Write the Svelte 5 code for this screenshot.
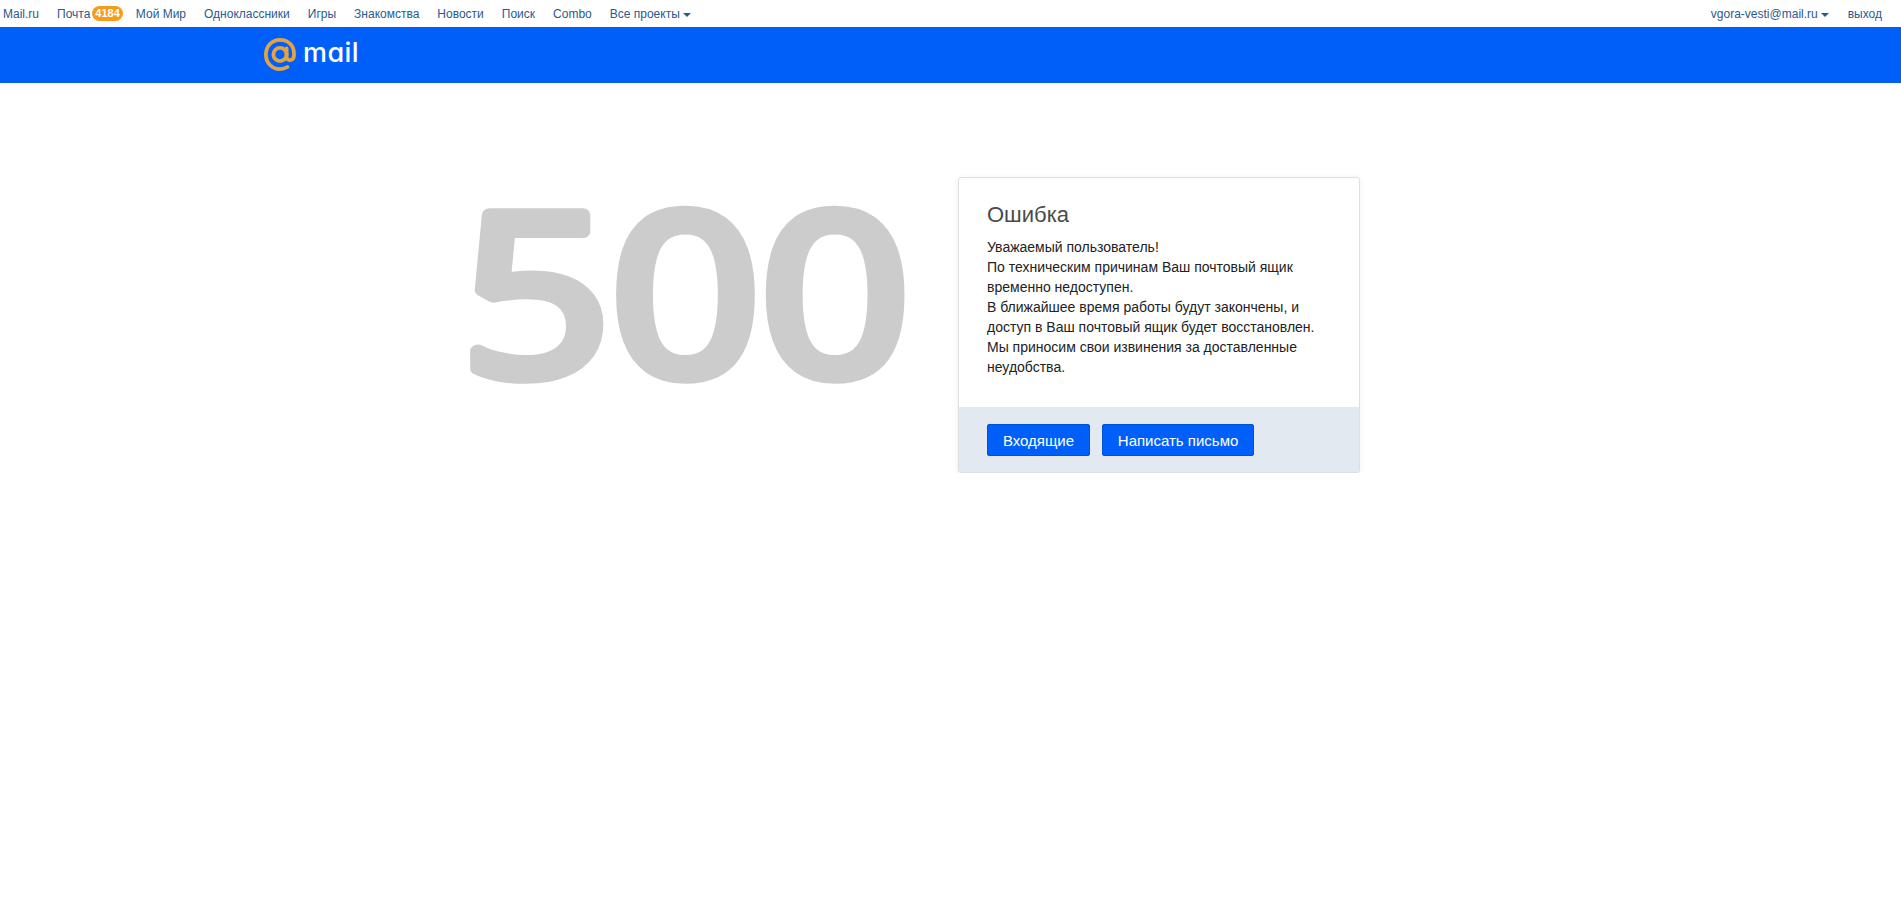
<script>
  const links = [
    { label: 'Mail.ru' },
    { label: 'Почта', badge: '4184' },
    { label: 'Мой Мир' },
    { label: 'Одноклассники' },
    { label: 'Игры' },
    { label: 'Знакомства' },
    { label: 'Новости' },
    { label: 'Поиск' },
    { label: 'Combo' },
    { label: 'Все проекты', caret: true }
  ];
  const lines = [
    'Уважаемый пользователь!',
    'По техническим причинам Ваш почтовый ящик',
    'временно недоступен.',
    'В ближайшее время работы будут закончены, и',
    'доступ в Ваш почтовый ящик будет восстановлен.',
    'Мы приносим свои извинения за доставленные',
    'неудобства.'
  ];
</script>

<nav class="topbar">
  <div class="nav-left">
    {#each links as l}
      <a class="nav-link" href="#top">{l.label}{#if l.badge}<span class="badge">{l.badge}</span>{/if}{#if l.caret}<span class="caret"></span>{/if}</a>
    {/each}
  </div>
  <div class="nav-right">
    <a class="nav-link" href="#top">vgora-vesti@mail.ru<span class="caret"></span></a>
    <a class="nav-link" href="#top">выход</a>
  </div>
</nav>

<header class="brand">
  <svg class="at" viewBox="0 0 32 34" width="32" height="34" aria-hidden="true">
    <circle cx="16" cy="16.5" r="6.6" fill="none" stroke="#e3a243" stroke-width="3.8"/>
    <path d="M22.6 10.5v8.5c0 4.2 6.6 4.2 7.2-.5 .2-1 .2-2 .2-3C30 7.5 24 1.9 16 1.9S1.9 8 1.9 16.5 8 31.1 16 31.1c2.8 0 5.2-.7 7.4-2.1" fill="none" stroke="#e3a243" stroke-width="3.8" stroke-linecap="round"/>
  </svg>
  <span class="wordmark">mail</span>
</header>

<main class="content">
  <svg class="code" width="480" height="220" viewBox="0 0 480 220" role="img" aria-label="500">
    <text transform="translate(11 195) scale(1.19 1.02)" class="code-text">500</text>
  </svg>
  <section class="card">
    <div class="card-body">
      <h1>Ошибка</h1>
      <p>{#each lines as line}<span class="line">{line}</span>{/each}</p>
    </div>
    <div class="card-foot">
      <button class="btn">Входящие</button>
      <button class="btn">Написать письмо</button>
    </div>
  </section>
</main>

<style>
  :global(body) {
    margin: 0;
    background: #fff;
    font-family: "Liberation Sans", Arial, sans-serif;
  }
  .topbar {
    height: 27px;
    display: flex;
    justify-content: space-between;
    align-items: center;
    background: #fff;
    font-size: 12px;
  }
  .nav-left, .nav-right {
    display: flex;
    align-items: center;
    height: 100%;
  }
  .nav-left { padding-left: 3px; gap: 18px; }
  .nav-right { padding-right: 19px; gap: 19px; }
  .nav-link {
    color: #2a5a8c;
    text-decoration: none;
    white-space: nowrap;
    display: flex;
    align-items: center;
  }
  .badge {
    margin: 0 -5px 0 2px;
    height: 15px;
    line-height: 15px;
    padding: 0 3px;
    border-radius: 8px;
    background: #f59c1a;
    color: #fff;
    font-size: 11px;
    font-weight: bold;
  }
  .caret {
    margin-left: 3px;
    margin-top: 2px;
    width: 0;
    height: 0;
    border-left: 4px solid transparent;
    border-right: 4px solid transparent;
    border-top: 4px solid #2a5a8c;
  }
  .brand {
    height: 56px;
    background: #005ff9;
    display: flex;
    align-items: center;
    padding-left: 264px;
    gap: 7px;
  }
  .at { display: block; }
  .wordmark {
    color: #fff;
    font-family: "Inter", sans-serif;
    font-feature-settings: "cv11";
    font-weight: 500;
    font-size: 27px;
    line-height: 1;
    margin-top: -5px;
    letter-spacing: 0.4px;
  }
  .content {
    display: flex;
    align-items: flex-start;
    padding: 94px 0 0 450px;
  }
  .code { display: block; margin-top: 3px; flex: none; overflow: visible; }
  .code-text {
    font-family: "Open Sans", sans-serif;
    font-weight: 400;
    font-size: 220px;
    fill: #cccccc;
    stroke: #cccccc;
    stroke-width: 13px;
    stroke-linejoin: round;
    stroke-linecap: round;
  }
  .card {
    margin-left: 28px;
    width: 402px;
    box-sizing: border-box;
    border: 1px solid #dcdfe3;
    border-radius: 3px;
    box-shadow: 0 1px 6px rgba(0, 0, 0, 0.07);
    overflow: hidden;
    background: #fff;
  }
  .card-body {
    height: 229px;
    box-sizing: border-box;
    padding: 24px 28px 0;
  }
  h1 {
    margin: 0 0 9px;
    font-size: 22px;
    font-weight: normal;
    line-height: 26px;
    color: #4a4a4a;
  }
  p {
    margin: 0;
    font-size: 14px;
    line-height: 20px;
    color: #222;
  }
  .line { display: block; white-space: nowrap; }
  .card-foot {
    background: #e2e9f0;
    padding: 17px 28px 16px;
    display: flex;
    gap: 12px;
  }
  .btn {
    height: 32px;
    padding: 0 14.9px;
    border: 1px solid #0052d9;
    border-radius: 2px;
    background: #005ff9;
    color: #fff;
    font: 15px "Liberation Sans", Arial, sans-serif;
  }
</style>
